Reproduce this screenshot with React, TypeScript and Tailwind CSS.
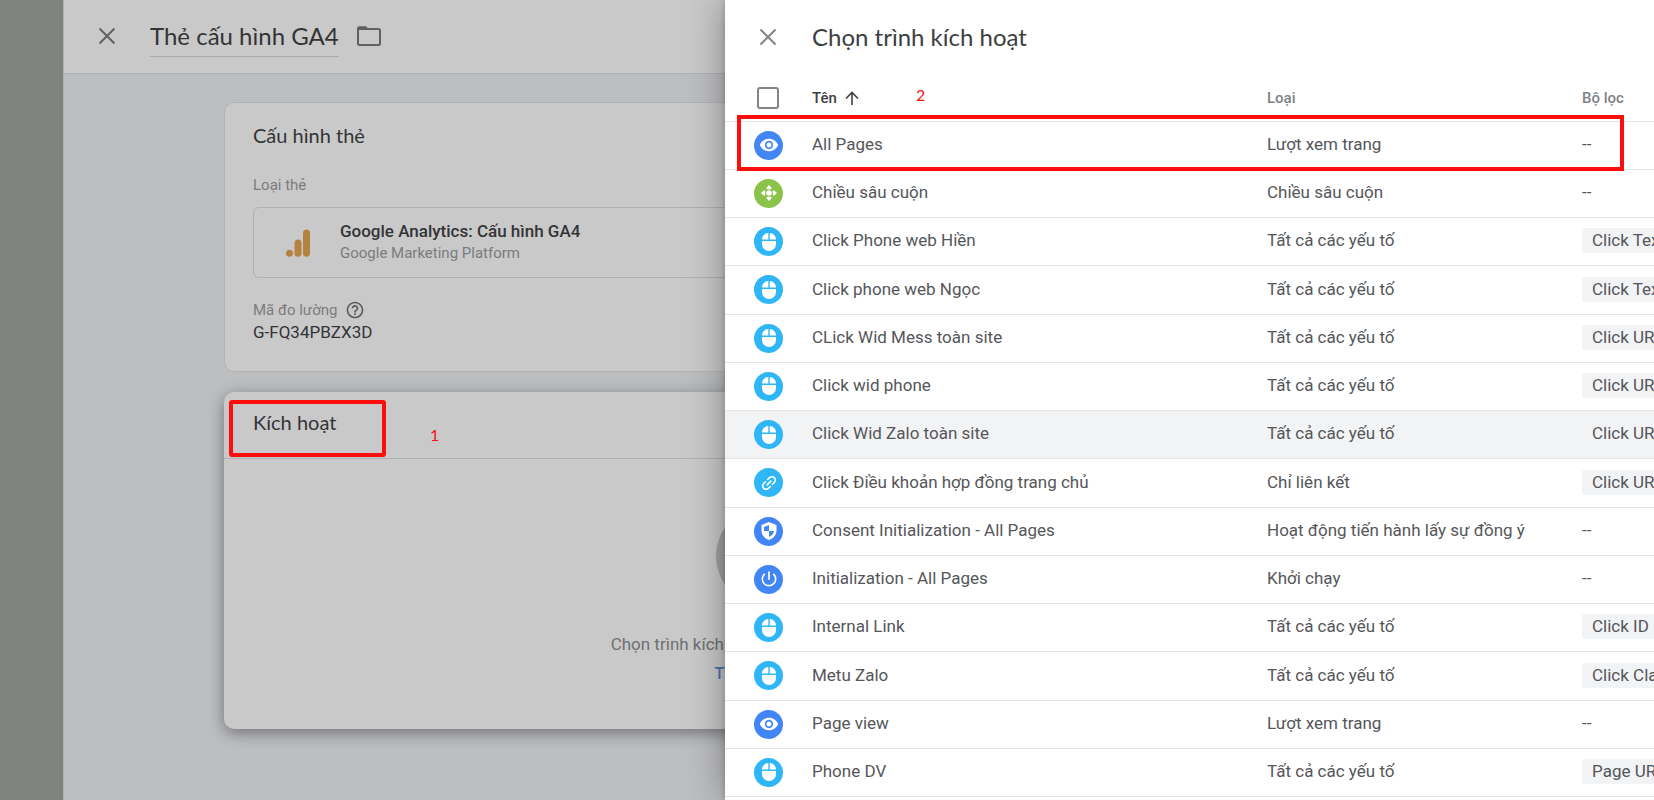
import type { ReactNode } from "react";
import { MdPowerSettingsNew, MdVisibility } from "react-icons/md";

type TriggerKind = "pageview" | "scroll" | "click" | "link" | "consent" | "init";

interface Trigger {
  name: string;
  kind: TriggerKind;
  type: string;
  filter?: string;
  hovered?: boolean;
}

const ALL_ELEMENTS = "Tất cả các yếu tố";

const triggers: Trigger[] = [
  { name: "All Pages", kind: "pageview", type: "Lượt xem trang" },
  { name: "Chiều sâu cuộn", kind: "scroll", type: "Chiều sâu cuộn" },
  { name: "Click Phone web Hiền", kind: "click", type: ALL_ELEMENTS, filter: "Click Text" },
  { name: "Click phone web Ngọc", kind: "click", type: ALL_ELEMENTS, filter: "Click Text" },
  { name: "CLick Wid Mess toàn site", kind: "click", type: ALL_ELEMENTS, filter: "Click URL" },
  { name: "Click wid phone", kind: "click", type: ALL_ELEMENTS, filter: "Click URL" },
  {
    name: "Click Wid Zalo toàn site",
    kind: "click",
    type: ALL_ELEMENTS,
    filter: "Click URL",
    hovered: true,
  },
  {
    name: "Click Điều khoản hợp đồng trang chủ",
    kind: "link",
    type: "Chỉ liên kết",
    filter: "Click URL",
  },
  {
    name: "Consent Initialization - All Pages",
    kind: "consent",
    type: "Hoạt động tiến hành lấy sự đồng ý",
  },
  { name: "Initialization - All Pages", kind: "init", type: "Khởi chạy" },
  { name: "Internal Link", kind: "click", type: ALL_ELEMENTS, filter: "Click ID" },
  { name: "Metu Zalo", kind: "click", type: ALL_ELEMENTS, filter: "Click Classes" },
  { name: "Page view", kind: "pageview", type: "Lượt xem trang" },
  { name: "Phone DV", kind: "click", type: ALL_ELEMENTS, filter: "Page URL" },
];

const badgeColors: Record<TriggerKind, string> = {
  pageview: "bg-[#4285f4]",
  scroll: "bg-[#8bc34a]",
  click: "bg-[#2fb6f6]",
  link: "bg-[#2fb6f6]",
  consent: "bg-[#4285f4]",
  init: "bg-[#4285f4]",
};

const ScrollIcon = () => (
  <svg viewBox="0 0 20 20" className="size-5" fill="currentColor">
    <circle cx="10" cy="10" r="2.8" />
    <path d="M10 2l3 3.200-1.400 1h-3.200L7 5.200z" />
    <path d="M10 18l3-3.200-1.400-1h-3.200l-1.400 1z" />
    <path d="M2 10l3.200-3 1 1.400v3.200l-1 1.400z" />
    <path d="M18 10l-3.200-3-1 1.400v3.200l1 1.400z" />
  </svg>
);

const MouseIcon = () => (
  <svg viewBox="0 0 20 20" className="size-5" fill="currentColor">
    <path d="M9.300 1v6.500H3C3 4 5.800 1.200 9.300 1z" />
    <path d="M10.700 1v6.500H17C17 4 14.200 1.200 10.700 1z" />
    <path d="M3 9h14v3a7 7 0 0 1-14 0z" />
  </svg>
);

const LinkIcon = () => (
  <svg viewBox="0 0 24 24" className="size-5 -rotate-45" fill="currentColor">
    <path d="M3.900 12c0-1.710 1.390-3.100 3.100-3.100h4V7H7c-2.760 0-5 2.240-5 5s2.240 5 5 5h4v-1.900H7c-1.710 0-3.100-1.390-3.100-3.100zM8 13h8v-2H8v2zm9-6h-4v1.900h4c1.710 0 3.100 1.390 3.100 3.100s-1.390 3.100-3.100 3.100h-4V17h4c2.760 0 5-2.240 5-5s-2.240-5-5-5z" />
  </svg>
);

const ShieldIcon = () => (
  <svg viewBox="0 0 20 20" className="size-5" fill="currentColor" fillRule="evenodd">
    <path d="M10 1l7.500 3v5.500c0 4.300-3 7.900-7.500 9.500-4.500-1.600-7.500-5.200-7.500-9.500V4zM10 4L5 6v4h5zM10 10v6c3-1.400 4.700-3.400 5-6z" />
  </svg>
);

const badgeIcons: Record<TriggerKind, ReactNode> = {
  pageview: <MdVisibility className="size-5" />,
  scroll: <ScrollIcon />,
  click: <MouseIcon />,
  link: <LinkIcon />,
  consent: <ShieldIcon />,
  init: <MdPowerSettingsNew className="size-5" />,
};

const CloseIcon = () => (
  <svg viewBox="0 0 18 18" className="size-[18px]" fill="none" stroke="currentColor" strokeWidth="2">
    <path d="M1.500 1.500l15 15M16.500 1.500l-15 15" />
  </svg>
);

const FolderIcon = () => (
  <svg viewBox="0 0 24 20" className="h-5 w-6">
    <rect x="1" y="3" width="22" height="16" rx="1.500" fill="none" stroke="currentColor" strokeWidth="2" />
    <path d="M0 4V2.500A2.200 2.200 0 0 1 2.200.300H9l3 3V4z" fill="currentColor" />
  </svg>
);

const AnalyticsIcon = () => (
  <svg viewBox="0 0 24 28" className="h-7 w-6" fill="#b5823f">
    <circle cx="3.500" cy="24.200" r="3.500" />
    <rect x="8.500" y="10.500" width="7" height="17.200" rx="3.500" />
    <rect x="17" y="0.500" width="7" height="27.200" rx="3.500" />
  </svg>
);

const HelpIcon = () => (
  <svg viewBox="0 0 24 24" className="size-5" fill="currentColor">
    <path d="M11 18h2v-2h-2v2zm1-16C6.480 2 2 6.480 2 12s4.480 10 10 10 10-4.480 10-10S17.520 2 12 2zm0 18c-4.410 0-8-3.590-8-8s3.590-8 8-8 8 3.590 8 8-3.590 8-8 8zm0-14c-2.210 0-4 1.790-4 4h2c0-1.100.9-2 2-2s2 .9 2 2c0 2-3 1.750-3 5h2c0-2.250 3-2.500 3-5 0-2.210-1.790-4-4-4z" />
  </svg>
);

function TagEditor() {
  return (
    <div className="flex min-w-0 flex-1 flex-col border-l border-[#aeafaf] bg-[#bdbec0]">
      <header className="flex h-[74px] shrink-0 items-center border-b border-[#b0b1b2] bg-[#c9c9c9] pb-px pl-[34px] text-[#606161]">
        <button type="button" aria-label="Đóng">
          <CloseIcon />
        </button>
        <h1 className="ml-[34px] border-b border-[#aaabab] pt-1 pb-1 font-['Lato',sans-serif] text-2xl leading-8 text-[#333436]">
          Thẻ cấu hình GA4
        </h1>
        <button type="button" aria-label="Thư mục" className="ml-[18px]">
          <FolderIcon />
        </button>
      </header>

      <main className="flex flex-col gap-5 pt-7 pl-40">
        <section className="h-[270px] max-w-[1084px] rounded-[10px] border border-[#b2b3b4] bg-[#c9c9c9] px-7 pt-[18px]">
          <h2 className="font-['Lato',sans-serif] text-xl leading-7 text-[#333436]">Cấu hình thẻ</h2>
          <p className="mt-[26px] text-[15px] leading-5 text-[#7b7c7d]">Loại thẻ</p>
          <div className="mt-3 flex h-[71px] items-center rounded-md border border-[#b0b1b1] pl-8">
            <AnalyticsIcon />
            <div className="ml-[30px] pb-1">
              <p className="text-[17px] leading-6 font-medium text-[#333436]">
                Google Analytics: Cấu hình GA4
              </p>
              <p className="text-[15px] leading-5 text-[#7b7c7d]">Google Marketing Platform</p>
            </div>
          </div>
          <p className="mt-5 flex items-center gap-2 text-[15px] leading-6 text-[#7b7c7d]">
            Mã đo lường
            <span className="text-[#5d5e5f]">
              <HelpIcon />
            </span>
          </p>
          <p className="text-[17px] leading-5 text-[#333436]">G-FQ34PBZX3D</p>
        </section>

        <section className="relative h-[337px] max-w-[1084px] rounded-[10px] bg-[#c9c9c9] shadow-[0_4px_16px_rgba(0,0,0,0.4)]">
          <h2 className="h-[67px] border-b border-[#b0b1b1] px-[29px] pt-4 font-['Lato',sans-serif] text-xl leading-7 text-[#333436]">
            Kích hoạt
          </h2>
          <div className="flex flex-col items-center pt-[47px]">
            <div className="size-[100px] rounded-full bg-[#a1a3a3]" />
            <p className="mt-6 text-[17px] leading-7 text-[#6f7071]">
              Chọn trình kích hoạt để kích hoạt thẻ này.
            </p>
            <a href="#more" className="text-base leading-8 font-medium text-[#4a75a8]">
              Tìm hiểu thêm
            </a>
          </div>
          {/* Step 1 marker */}
          <div className="pointer-events-none absolute top-2 left-[5px] flex items-center">
            <div className="h-[57px] w-[157px] rounded-[3px] border-4 border-[#ff0d0d]" />
            <span className="ml-11 pt-3 font-['Lato',sans-serif] text-base text-[#ff0d0d]">1</span>
          </div>
        </section>
      </main>
    </div>
  );
}

function TriggerTable() {
  return (
    <table className="h-full w-full table-fixed border-collapse text-left text-[17px] text-[#55565a]">
      <colgroup>
        <col className="w-[87px]" />
        <col className="w-[455px]" />
        <col className="w-[315px]" />
        <col />
      </colgroup>
      <thead>
        <tr className="h-[42px] border-b border-[#e4e5e6] text-[15px] text-[#808286]">
          <th className="p-0 pb-1 pl-8 font-medium">
            <input
              type="checkbox"
              aria-label="Chọn tất cả"
              className="block size-[22px] appearance-none rounded-[3px] border-2 border-[#858585]"
            />
          </th>
          <th className="p-0 pb-1 font-medium text-[#404144]">
            <span className="flex items-center gap-2">
              Tên
              <svg viewBox="0 0 14 14" className="size-3.5" fill="none" stroke="currentColor" strokeWidth="1.600">
                <path d="M7 14V2M1 7.500l6-6 6 6" />
              </svg>
            </span>
          </th>
          <th className="p-0 pb-1 font-medium">Loại</th>
          <th className="p-0 pb-1 font-medium">Bộ lọc</th>
        </tr>
      </thead>
      <tbody>
        {triggers.map((trigger) => (
          <tr
            key={trigger.name}
            className={`border-b border-[#e4e5e6] ${trigger.hovered ? "bg-[#f2f3f5]" : ""}`}
          >
            <td className="p-0 pl-[29px]">
              <span
                className={`flex size-[29px] items-center justify-center rounded-full text-white ${badgeColors[trigger.kind]}`}
              >
                {badgeIcons[trigger.kind]}
              </span>
            </td>
            <td className="p-0 pb-px">{trigger.name}</td>
            <td className="p-0 pb-px">{trigger.type}</td>
            <td className="overflow-hidden p-0 pb-px whitespace-nowrap">
              {trigger.filter ? (
                <span className="inline-block rounded-[3px] bg-[#f2f3f5] px-2.5 leading-[25px]">
                  {trigger.filter}
                </span>
              ) : (
                "--"
              )}
            </td>
          </tr>
        ))}
      </tbody>
    </table>
  );
}

function TriggerDrawer() {
  return (
    <aside className="absolute inset-y-0 right-0 left-[725px] flex flex-col overflow-hidden bg-white pb-[3px] shadow-[0_0_36px_rgba(0,0,0,0.35),0_0_6px_rgba(0,0,0,0.2)]">
      <header className="flex h-[79px] shrink-0 items-center pb-1.5 pl-[34px] text-[#858585]">
        <button type="button" aria-label="Đóng">
          <CloseIcon />
        </button>
        <h2 className="ml-[35px] font-['Lato',sans-serif] text-2xl leading-8 text-[#3c4043]">
          Chọn trình kích hoạt
        </h2>
      </header>
      <div className="min-h-0 flex-1">
        <TriggerTable />
      </div>
      {/* Step 2 marker */}
      <div className="pointer-events-none absolute top-[115px] right-[30px] left-3 h-[56px] border-4 border-[#ff0d0d]" />
      <span className="absolute top-[83px] left-[191px] font-['Lato',sans-serif] text-base text-[#ff0d0d]">
        2
      </span>
    </aside>
  );
}

export default function App() {
  return (
    <div className="relative flex h-screen overflow-hidden bg-[#808280] font-['Roboto',sans-serif]">
      <div className="w-[63px] shrink-0" />
      <TagEditor />
      <TriggerDrawer />
    </div>
  );
}
